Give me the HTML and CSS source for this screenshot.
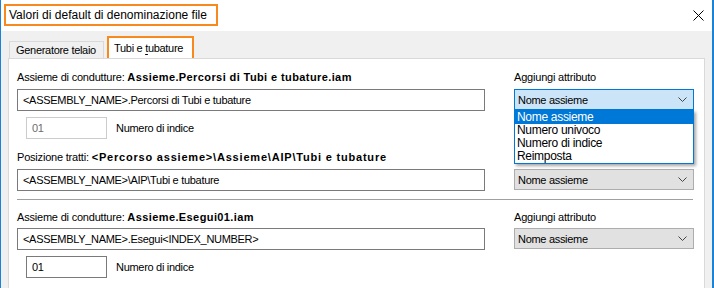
FILE: index.html
```html
<!DOCTYPE html>
<html lang="it">
<head>
  <meta charset="UTF-8" />
  <title>Valori di default di denominazione file</title>
  <link rel="stylesheet" href="styles.css">
</head>
<body>
  <div class="window">
    <div class="titlebar">
      <div class="title">Valori di default di denominazione file</div>
      <svg class="close" width="11" height="11" viewBox="0 0 11 11">
        <path d="M0.5 0.5 L10.5 10.5 M10.5 0.5 L0.5 10.5" stroke="#000" stroke-width="1" fill="none" />
      </svg>
    </div>
    <div class="client">
      <div class="tabs">
        <div class="tab">Generatore telaio</div>
        <div class="tab active">Tubi e <u>t</u>ubature</div>
      </div>
      <div class="panel">
        <div class="row labels">
          <div class="left">Assieme di condutture: <b>Assieme.Percorsi di Tubi e tubature.iam</b></div>
          <div class="right">Aggiungi attributo</div>
        </div>
        <div class="row fields">
          <div class="left"><div class="textbox">&lt;ASSEMBLY_NAME&gt;.Percorsi di Tubi e tubature</div></div>
          <div class="right">
            <div class="combo focused">
              <span>Nome assieme</span>
              <svg class="chevron" width="9" height="5" viewBox="0 0 9 5"><path d="M0.5 0.5 L4.5 4.5 L8.5 0.5" stroke="#444" fill="none" /></svg>
            </div>
            <ul class="dropdown">
              <li class="selected">Nome assieme</li>
              <li>Numero univoco</li>
              <li>Numero di indice</li>
              <li>Reimposta</li>
            </ul>
          </div>
        </div>
        <div class="index">
          <div class="numbox disabled">01</div>
          <span>Numero di indice</span>
        </div>
        <div class="row labels second">
          <div class="left">Posizione tratti: <b class="path">&lt;Percorso assieme&gt;\Assieme\AIP\Tubi e tubature</b></div>
        </div>
        <div class="row fields">
          <div class="left"><div class="textbox">&lt;ASSEMBLY_NAME&gt;\AIP\Tubi e tubature</div></div>
          <div class="right">
            <div class="combo">
              <span>Nome assieme</span>
              <svg class="chevron" width="9" height="5" viewBox="0 0 9 5"><path d="M0.5 0.5 L4.5 4.5 L8.5 0.5" stroke="#444" fill="none" /></svg>
            </div>
          </div>
        </div>
        <div class="separator"></div>
        <div class="row labels third">
          <div class="left">Assieme di condutture: <b>Assieme.Esegui01.iam</b></div>
          <div class="right">Aggiungi attributo</div>
        </div>
        <div class="row fields tight">
          <div class="left"><div class="textbox">&lt;ASSEMBLY_NAME&gt;.Esegui&lt;INDEX_NUMBER&gt;</div></div>
          <div class="right">
            <div class="combo">
              <span>Nome assieme</span>
              <svg class="chevron" width="9" height="5" viewBox="0 0 9 5"><path d="M0.5 0.5 L4.5 4.5 L8.5 0.5" stroke="#444" fill="none" /></svg>
            </div>
          </div>
        </div>
        <div class="index">
          <div class="numbox">01</div>
          <span>Numero di indice</span>
        </div>
      </div>
    </div>
  </div>
</body>
</html>
```
FILE: styles.css
```css
body {
  margin: 0;
  width: 714px;
  height: 288px;
  overflow: hidden;
  font-family: "Liberation Sans", Arial, sans-serif;
  font-size: 11px;
  letter-spacing: -0.3px;
  color: #000000;
}
.window {
  height: 288px;
  border-left: 1px solid #1883d7;
  border-right: 2px solid #1883d7;
  display: flex;
  flex-direction: column;
}
.titlebar {
  height: 31px;
  flex-shrink: 0;
  background: #ffffff;
  display: flex;
  align-items: flex-start;
  justify-content: space-between;
  padding: 4px 8px 0 3px;
  box-sizing: border-box;
}
.title {
  border: 2px solid #f7891f;
  height: 22px;
  width: 214px;
  box-sizing: border-box;
  padding-left: 3px;
  font-size: 12px;
  letter-spacing: 0;
  line-height: 18px;
}
.close {
  margin-top: 6px;
}
.client {
  flex: 1;
  background: #f0f0f0;
  display: flex;
  flex-direction: column;
  padding: 5px 7px 0 7px;
}
.tabs {
  display: flex;
  align-items: flex-end;
  height: 22px;
  padding-left: 1px;
}
.tab {
  height: 17px;
  box-sizing: border-box;
  border: 1px solid #d9d9d9;
  border-bottom: none;
  padding: 0 6px;
  line-height: 16px;
  width: 95px;
  margin-right: 3px;
}
.tab.active {
  height: 22px;
  width: 87px;
  border: 2px solid #f7891f;
  border-bottom: none;
  background: #ffffff;
  padding: 0 5px;
  line-height: 20px;
  position: relative;
  z-index: 1;
}
.tab u {
  text-underline-offset: 2px;
}
.panel {
  flex: 1;
  background: #ffffff;
  border: 1px solid #d9d9d9;
  border-bottom: none;
  padding: 10px 10px 0 8px;
}
.row {
  display: flex;
  gap: 29px;
}
.left {
  width: 468px;
}
.right {
  width: 180px;
  position: relative;
}
.labels {
  line-height: 16px;
  height: 16px;
  white-space: nowrap;
  letter-spacing: -0.2px;
}
.labels b {
  letter-spacing: 0.4px;
}
.labels b.path {
  letter-spacing: 0.8px;
}
.labels.second {
  margin-top: 10px;
}
.labels.third {
  margin-top: 9px;
}
.fields {
  margin-top: 4px;
}
.fields.tight {
  margin-top: 3px;
}
.textbox {
  height: 22px;
  box-sizing: border-box;
  border: 1px solid #7a7a7a;
  padding-left: 5px;
  line-height: 20px;
}
.combo {
  height: 21px;
  box-sizing: border-box;
  border: 1px solid #adadad;
  background: #e1e1e1;
  display: flex;
  align-items: center;
  justify-content: space-between;
  padding: 0 6px 0 3px;
}
.combo.focused {
  background: #cce4f7;
  border-color: #0078d7;
}
.chevron {
  display: block;
}
.dropdown {
  position: absolute;
  top: 21px;
  left: 0;
  width: 180px;
  box-sizing: border-box;
  margin: 0;
  padding: 0;
  list-style: none;
  background: #ffffff;
  border: 1px solid #0078d7;
  box-shadow: 2px 2px 3px rgba(0, 0, 0, 0.35);
  z-index: 2;
}
.dropdown li {
  height: 13px;
  line-height: 13px;
  padding-left: 2px;
  font-size: 12px;
}
.dropdown li.selected {
  background: #0078d7;
  color: #ffffff;
}
.index {
  display: flex;
  align-items: center;
  gap: 9px;
  margin-top: 6px;
  padding-left: 9px;
}
.numbox {
  width: 81px;
  height: 22px;
  box-sizing: border-box;
  border: 1px solid #7a7a7a;
  padding-left: 5px;
  line-height: 20px;
}
.numbox.disabled {
  border-color: #cccccc;
  color: #6d6d6d;
}
.separator {
  height: 1px;
  width: 676px;
  background: #a0a0a0;
  margin-top: 8px;
}
```
